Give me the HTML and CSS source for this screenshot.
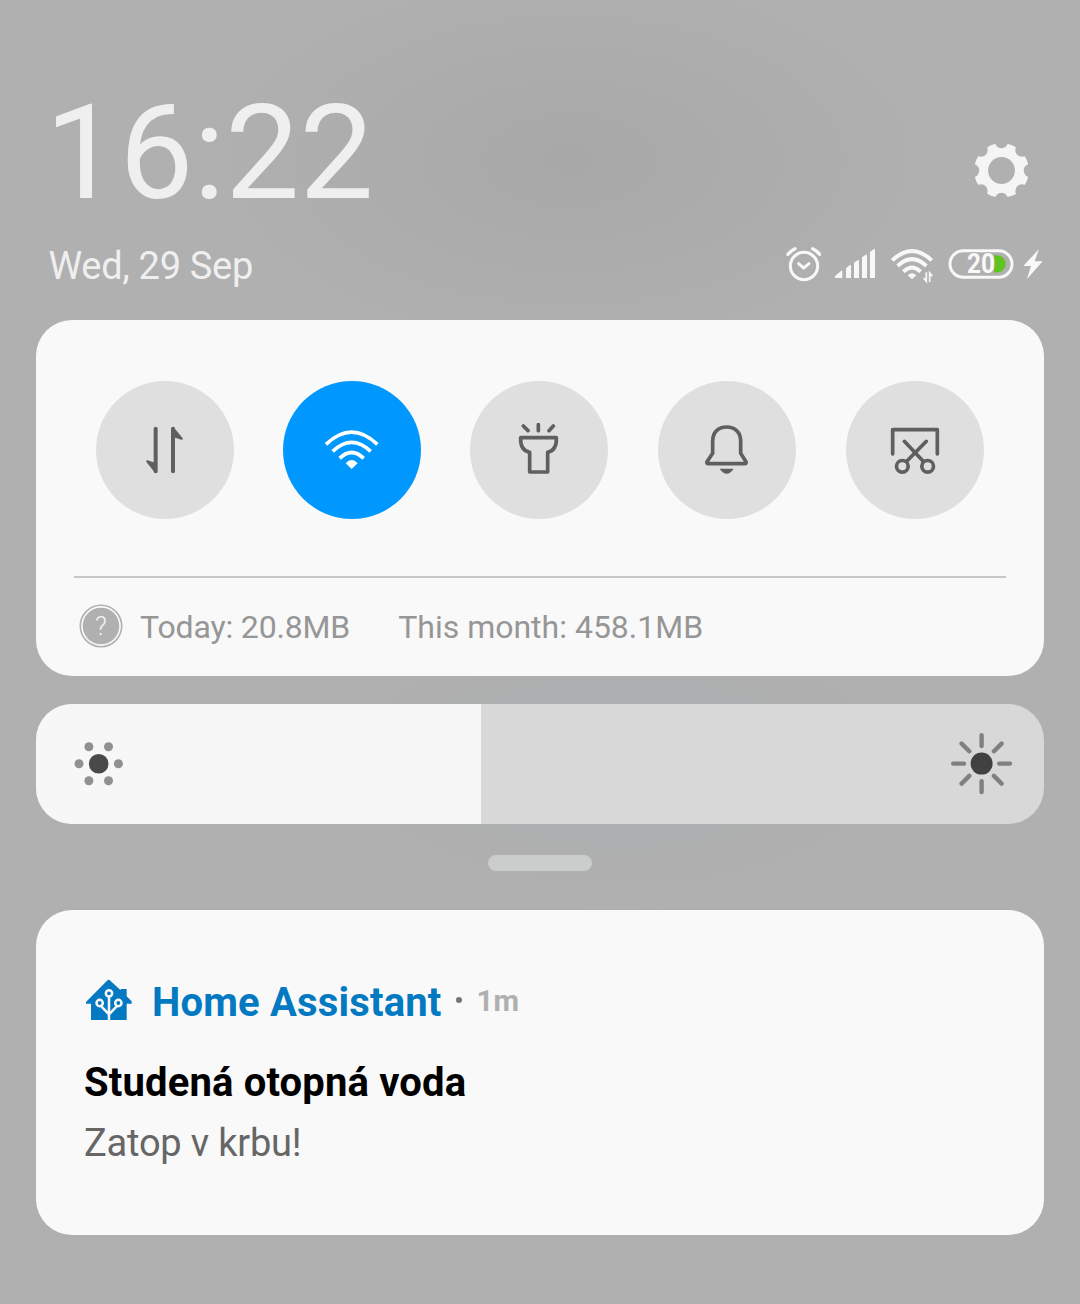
FILE: index.html
```html
<!DOCTYPE html>
<html lang="en">
<head>
<meta charset="utf-8">
<title>Notification shade</title>
<link rel="stylesheet" href="styles.css">
</head>
<body>
<main class="shade">
  <header class="header">
    <div class="row row-time">
      <div class="time">16:22</div>
      <svg class="gear" width="60" height="60" viewBox="-30.5 -30.5 60 60">
        <defs>
          <mask id="gear-mask">
            <circle r="27.4" fill="#fff"/>
            <g fill="#000">
              <circle r="13.4"/>
              <circle cx="28.8" r="6.6"/><circle cx="-28.8" r="6.6"/>
              <circle cy="28.8" r="6.6"/><circle cy="-28.8" r="6.6"/>
              <circle cx="20.4" cy="20.4" r="6.6"/><circle cx="-20.4" cy="20.4" r="6.6"/>
              <circle cx="20.4" cy="-20.4" r="6.6"/><circle cx="-20.4" cy="-20.4" r="6.6"/>
            </g>
          </mask>
        </defs>
        <rect x="-30" y="-30" width="60" height="60" fill="#f5f5f5" mask="url(#gear-mask)"/>
      </svg>
    </div>
    <div class="row row-date">
      <div class="date">Wed, 29 Sep</div>
      <div class="status">
        <svg class="alarm" width="35" height="40" viewBox="48 42 105 120" fill="none" stroke="#f8f8f8" stroke-width="9" stroke-linecap="round" stroke-linejoin="round">
          <circle cx="102" cy="108" r="41"/>
          <path d="M86 101 L101 114 L117 101"/>
          <path d="M54 73 Q62 62 75 56 M128 56 Q141 62 149 73" stroke-width="10"/>
        </svg>
        <svg class="signal" width="40" height="40" viewBox="195 42 120 120" fill="#f8f8f8">
          <path d="M195 141 V138 L214 122 Q217 120 217 124 V144 H197 Q195 144 195 141Z"/>
          <path d="M228 144 V115 L239 106 Q243 104 243 108 V144Z"/>
          <path d="M252 144 V98 L263 91 Q267 89 267 93 V144Z"/>
          <path d="M276 144 V82 L287 74 Q291 72 291 77 V144Z"/>
          <path d="M300 144 V66 L311 58 Q315 56 315 60 V144Z"/>
        </svg>
        <svg class="wifi" width="43" height="40" viewBox="363 42 129 120" fill="none" stroke="#f8f8f8" stroke-width="12">
          <path d="M367 91 Q426 35 485 91"/>
          <path d="M383 108 Q426 67 469 108"/>
          <path d="M400 125 Q426 100 452 125"/>
          <path d="M413 136 Q426 123 439 136 L426 148Z" fill="#f8f8f8" stroke="none"/>
          <path d="M469 127 V154 L461 144 M479 156 V129 L487 139" stroke-width="5"/>
        </svg>
        <svg class="battery" width="66" height="40" viewBox="0 0 66 40">
          <rect x="2" y="6.7" width="62" height="26.6" rx="13.3" fill="none" stroke="#f8f8f8" stroke-width="3"/>
          <path d="M46 11.300 H49 A8.7 8.600 0 0 1 49 28.500 H46Z" fill="#5dc421"/>
          <text class="battery-text" x="19" y="29.300" textLength="28" lengthAdjust="spacingAndGlyphs">20</text>
        </svg>
        <svg class="bolt" width="20" height="40" viewBox="758 42 60 120" fill="#f8f8f8">
          <path d="M806 57 L759 108 H782 L770 147 L817 94 H793Z"/>
        </svg>
      </div>
    </div>
  </header>

  <section class="panel">
    <div class="toggles">
      <div class="toggle">
        <svg width="46" height="54" viewBox="0 2 138 162" fill="none" stroke="#5e5f60" stroke-width="12" stroke-linecap="round" stroke-linejoin="round">
          <path d="M41 19 V147"/><path d="M93 19 V147"/>
          <path d="M41 118 V148 L16 117 L35 124Z M93 48 V18 L119 49 L99 42Z" fill="#5e5f60" stroke-width="7"/>
        </svg>
      </div>
      <div class="toggle toggle-on">
        <svg width="56" height="54" viewBox="702 160 168 162" fill="none" stroke="#fff" stroke-width="11">
          <path d="M708 224 Q785 151 862 224"/>
          <path d="M728 245 Q785 191 842 245"/>
          <path d="M749 266 Q785 231 821 266"/>
          <path d="M767 281 Q785 261 803 281 L785 298Z" fill="#fff" stroke="none"/>
        </svg>
      </div>
      <div class="toggle">
        <svg width="46" height="54" viewBox="48 39 138 162" fill="none" stroke="#5e5f60" stroke-width="11" stroke-linejoin="round">
          <path d="M62 83 H169 Q171 121 143 127 V186 H89 V127 Q60 121 62 83Z"/>
          <path d="M70 48 L84 62 M115 44 V62 M160 48 L147 62" stroke-linecap="round"/>
        </svg>
      </div>
      <div class="toggle toggle-shift">
        <svg width="46" height="54" viewBox="42 39 138 162" fill="none" stroke="#5e5f60" stroke-width="11" stroke-linejoin="round">
          <path d="M68 93 C68 66 86 51 109.500 51 C134 51 152 66 152 93 V130 L168 155 Q170 161 164 161 H55 Q49 161 51 155 L68 130Z"/>
          <path d="M89 176 H131 Q121 191 110 191 Q99 191 89 176Z" fill="#5e5f60" stroke="none"/>
        </svg>
      </div>
      <div class="toggle toggle-shift">
        <svg width="52" height="54" viewBox="597 39 156 162" fill="none" stroke="#5e5f60" stroke-width="11" stroke-linecap="round" stroke-linejoin="round">
          <path d="M608 132 V59 H742 V132"/>
          <path d="M643 94 L699 153 M709 94 L651 153"/>
          <circle cx="637" cy="169" r="17.500"/><circle cx="713" cy="169" r="17.500"/>
        </svg>
      </div>
    </div>
    <div class="usage">
      <svg class="help" width="44" height="44" viewBox="0 0 44 44">
        <circle cx="22" cy="22" r="20.700" fill="none" stroke="#b0b0b0" stroke-width="1.600"/>
        <circle cx="22" cy="22" r="18.300" fill="#b0b0b0"/>
        <text class="help-text" x="22" y="31" text-anchor="middle">?</text>
      </svg>
      <span class="today">Today: 20.8MB</span>
      <span class="month">This month: 458.1MB</span>
    </div>
  </section>

  <section class="brightness">
    <div class="level">
      <svg width="54" height="54" viewBox="-26.700 -26.700 54 54" fill="#909090">
        <circle r="9.800" fill="#494949"/>
        <circle cx="-19.700" r="4.500"/><circle cx="19.700" r="4.500"/>
        <circle cx="-9.800" cy="-17" r="4.500"/><circle cx="9.800" cy="-17" r="4.500"/>
        <circle cx="-9.800" cy="17" r="4.500"/><circle cx="9.800" cy="17" r="4.500"/>
      </svg>
    </div>
    <svg class="sun" width="64" height="64" viewBox="-31.600 -31.600 64 64" stroke="#808080" stroke-width="4.400" stroke-linecap="round">
      <circle r="11" fill="#414141" stroke="none"/>
      <path d="M0 -28.400V-17.600M0 28.400V17.600M-28.400 0H-17.600M28.400 0H17.600M-20 -20L-12.300 -12.300M20 -20L12.300 -12.300M-20 20L-12.300 12.300M20 20L12.300 12.300"/>
    </svg>
  </section>

  <div class="handle"></div>

  <article class="notification">
    <div class="app">
      <svg width="48" height="44" viewBox="46 54 144 132">
        <path d="M112 62 Q117 57 122 62 L153 91 V87 H171 V109 L186 124 V131 H171 V180 H64 V131 H49 V126Z" fill="#0279c1"/>
        <g fill="none" stroke="#f9f9f9" stroke-width="7.500">
          <path d="M118 180 V109 M118 163 L95 139 M118 163 L141 139"/>
          <circle cx="118" cy="100" r="9.500"/><circle cx="90" cy="129" r="9.500"/><circle cx="146" cy="129" r="9.500"/>
        </g>
      </svg>
      <span class="app-name">Home Assistant</span>
      <span class="dot"></span>
      <span class="age">1m</span>
    </div>
    <div class="title">Studená otopná voda</div>
    <div class="message">Zatop v krbu!</div>
  </article>
</main>
</body>
</html>
```

FILE: styles.css
```css
* { box-sizing: border-box; }

body {
  margin: 0;
  font-family: Roboto, sans-serif;
}

svg { display: block; flex: none; }

.shade {
  width: 1080px;
  height: 1304px;
  padding: 87px 36px 0;
  background:
    radial-gradient(ellipse 360px 190px at 570px 160px, #a8a8a8 0%, rgba(168, 168, 168, 0) 100%),
    radial-gradient(ellipse 320px 150px at 620px 760px, #abadaf 0%, rgba(171, 173, 175, 0) 100%),
    #b0b0b0;
}

.header { height: 233px; }

.row {
  display: flex;
  justify-content: space-between;
}

.time {
  margin-left: 9px;
  font-size: 132px;
  line-height: 132px;
  color: #efefef;
}

.gear { margin: 53px 13px 0 0; }

.row-date { margin-top: 25px; }

.date {
  margin: 3px 0 0 12.5px;
  font-size: 38px;
  line-height: 38px;
  letter-spacing: -0.3px;
  color: #efefef;
}

.status { display: flex; margin-right: 1px; }
.signal { margin-left: 14px; }
.wifi { margin-left: 16px; }
.battery { margin-left: 14px; }
.bolt { margin-left: 9px; }

.battery-text {
  font-size: 27.5px;
  font-weight: 700;
  fill: #f8f8f8;
  stroke: #b0b0b0;
  stroke-width: 1.5px;
  paint-order: stroke;
}

.panel {
  height: 356px;
  padding: 61px 38px 0;
  border-radius: 36px;
  background: #f9f9f9;
}

.toggles {
  display: flex;
  gap: 49px;
  height: 195px;
  padding: 0 22px;
}

.toggle {
  display: flex;
  flex: none;
  align-items: center;
  justify-content: center;
  width: 138px;
  height: 138px;
  border-radius: 50%;
  background: #dfdfdf;
}

.toggle-on { background: #0098ff; }
.toggle-shift { margin-left: 1px; }

.usage {
  display: flex;
  align-items: center;
  height: 100px;
  padding-left: 5px;
  border-top: 2px solid #c7c7c7;
  font-size: 32px;
  color: #969696;
}

.help { margin-bottom: 2px; }
.help-text { font-size: 26px; font-weight: 300; fill: #f4f4f4; }
.today { margin-left: 17px; letter-spacing: -0.15px; }
.month { margin-left: 48px; }

.brightness {
  display: flex;
  align-items: center;
  justify-content: space-between;
  height: 120px;
  margin-top: 28px;
  padding-right: 30px;
  border-radius: 36px;
  overflow: hidden;
  background: #d8d8d8;
}

.level {
  display: flex;
  align-items: center;
  width: 445px;
  height: 120px;
  padding-left: 36px;
  background: #f7f7f7;
}

.handle {
  width: 104px;
  height: 16px;
  margin: 31px auto 39px;
  border-radius: 8px;
  background: #cbcccc;
}

.notification {
  height: 325px;
  padding: 66px 48px 0;
  border-radius: 36px;
  background: #f9f9f9;
}

.app {
  display: flex;
  align-items: center;
  height: 48px;
  padding-left: 1px;
}

.app-name {
  margin: 4px 0 0 19px;
  font-size: 40px;
  letter-spacing: 0.18px;
  font-weight: 700;
  color: #0279c1;
}

.dot {
  width: 6px;
  height: 6px;
  margin: 0 15px 0 14px;
  border-radius: 50%;
  background: #757575;
}

.age {
  margin-top: 1px;
  font-size: 29.5px;
  font-weight: 700;
  color: #b0b0b0;
}

.title {
  margin-top: 39px;
  font-size: 40px;
  line-height: 40px;
  letter-spacing: 0.15px;
  font-weight: 700;
  color: #000;
}

.message {
  margin-top: 21px;
  font-size: 38px;
  line-height: 38px;
  letter-spacing: -0.2px;
  color: #666;
}
```
